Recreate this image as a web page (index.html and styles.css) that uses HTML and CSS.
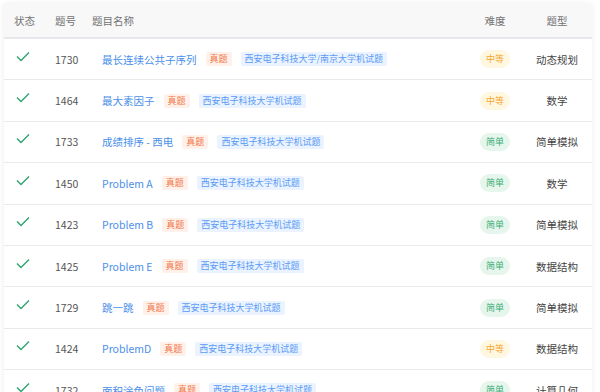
FILE: index.html
```html
<!DOCTYPE html>
<html lang="zh">
<head>
  <meta charset="UTF-8">
  <title>题目列表</title>
  <link rel="stylesheet" href="styles.css">
</head>
<body>
  <div class="table">
    <div class="row head">
      <div class="cell">状态</div>
      <div class="cell">题号</div>
      <div class="cell">题目名称</div>
      <div class="cell center">难度</div>
      <div class="cell center">题型</div>
    </div>

    <div class="row">
      <div class="cell"><svg class="ok" viewBox="0 0 14 10"><path d="M1 5 L5 9 L13 1"/></svg></div>
      <div class="cell num">1730</div>
      <div class="cell title"><a>最长连续公共子序列</a><span class="tag real">真题</span><span class="tag school">西安电子科技大学/南京大学机试题</span></div>
      <div class="cell center"><span class="level mid">中等</span></div>
      <div class="cell center type">动态规划</div>
    </div>

    <div class="row">
      <div class="cell"><svg class="ok" viewBox="0 0 14 10"><path d="M1 5 L5 9 L13 1"/></svg></div>
      <div class="cell num">1464</div>
      <div class="cell title"><a>最大素因子</a><span class="tag real">真题</span><span class="tag school">西安电子科技大学机试题</span></div>
      <div class="cell center"><span class="level mid">中等</span></div>
      <div class="cell center type">数学</div>
    </div>

    <div class="row">
      <div class="cell"><svg class="ok" viewBox="0 0 14 10"><path d="M1 5 L5 9 L13 1"/></svg></div>
      <div class="cell num">1733</div>
      <div class="cell title"><a>成绩排序 - 西电</a><span class="tag real">真题</span><span class="tag school">西安电子科技大学机试题</span></div>
      <div class="cell center"><span class="level easy">简单</span></div>
      <div class="cell center type">简单模拟</div>
    </div>

    <div class="row">
      <div class="cell"><svg class="ok" viewBox="0 0 14 10"><path d="M1 5 L5 9 L13 1"/></svg></div>
      <div class="cell num">1450</div>
      <div class="cell title"><a>Problem A</a><span class="tag real">真题</span><span class="tag school">西安电子科技大学机试题</span></div>
      <div class="cell center"><span class="level easy">简单</span></div>
      <div class="cell center type">数学</div>
    </div>

    <div class="row">
      <div class="cell"><svg class="ok" viewBox="0 0 14 10"><path d="M1 5 L5 9 L13 1"/></svg></div>
      <div class="cell num">1423</div>
      <div class="cell title"><a>Problem B</a><span class="tag real">真题</span><span class="tag school">西安电子科技大学机试题</span></div>
      <div class="cell center"><span class="level easy">简单</span></div>
      <div class="cell center type">简单模拟</div>
    </div>

    <div class="row">
      <div class="cell"><svg class="ok" viewBox="0 0 14 10"><path d="M1 5 L5 9 L13 1"/></svg></div>
      <div class="cell num">1425</div>
      <div class="cell title"><a>Problem E</a><span class="tag real">真题</span><span class="tag school">西安电子科技大学机试题</span></div>
      <div class="cell center"><span class="level easy">简单</span></div>
      <div class="cell center type">数据结构</div>
    </div>

    <div class="row">
      <div class="cell"><svg class="ok" viewBox="0 0 14 10"><path d="M1 5 L5 9 L13 1"/></svg></div>
      <div class="cell num">1729</div>
      <div class="cell title"><a>跳一跳</a><span class="tag real">真题</span><span class="tag school">西安电子科技大学机试题</span></div>
      <div class="cell center"><span class="level easy">简单</span></div>
      <div class="cell center type">简单模拟</div>
    </div>

    <div class="row">
      <div class="cell"><svg class="ok" viewBox="0 0 14 10"><path d="M1 5 L5 9 L13 1"/></svg></div>
      <div class="cell num">1424</div>
      <div class="cell title"><a>ProblemD</a><span class="tag real">真题</span><span class="tag school">西安电子科技大学机试题</span></div>
      <div class="cell center"><span class="level mid">中等</span></div>
      <div class="cell center type">数据结构</div>
    </div>

    <div class="row">
      <div class="cell"><svg class="ok" viewBox="0 0 14 10"><path d="M1 5 L5 9 L13 1"/></svg></div>
      <div class="cell num">1732</div>
      <div class="cell title"><a>面积涂色问题</a><span class="tag real">真题</span><span class="tag school">西安电子科技大学机试题</span></div>
      <div class="cell center"><span class="level easy">简单</span></div>
      <div class="cell center type">计算几何</div>
    </div>
  </div>
</body>
</html>
```

FILE: styles.css
```css
body {
  margin: 0;
  padding: 4px 8px 0 4px;
  background: #fff;
  font-family: "Noto Sans CJK SC", "Noto Sans", sans-serif;
  font-size: 10.5px;
  color: #515a6e;
}

.table {
  background: #fff;
  box-shadow: 0 0 6px rgba(0, 0, 0, 0.08);
}

.row {
  display: grid;
  grid-template-columns: 41px 37px 1fr 54px 70px;
  align-items: center;
  height: 41.4px;
  box-sizing: border-box;
  border-bottom: 1px solid #e8eaec;
}

.row.head {
  height: 35px;
  background: #f8f8f9;
  border-bottom: 2px solid #e6e8eb;
  color: #737373;
}

.cell {
  padding-left: 10px;
  white-space: nowrap;
}

.center {
  padding-left: 0;
  text-align: center;
}

.ok {
  width: 14px;
  height: 11px;
  margin-left: 2px;
  margin-bottom: 3px;
  fill: none;
  stroke: #2ea36f;
  stroke-width: 1.4;
}

.num {
  color: #555;
}

.title {
  padding-left: 20px;
  display: flex;
  align-items: center;
}

.title a {
  color: #4a8fea;
  cursor: pointer;
}

.tag {
  font-size: 9px;
  line-height: 14px;
  padding: 0 4px;
  margin-left: 9px;
  border-radius: 2px;
}

.tag.real {
  color: #f2784b;
  background: #fff1ea;
}

.tag.school {
  color: #5b9bf5;
  background: #eaf3ff;
}

.level {
  display: inline-block;
  font-size: 9px;
  line-height: 18px;
  padding: 0 6px;
  border-radius: 9px;
}

.level.mid {
  color: #f4a732;
  background: #fff7df;
}

.level.easy {
  color: #3cae77;
  background: #e6f6ed;
}

.type {
  color: #444;
}
```
